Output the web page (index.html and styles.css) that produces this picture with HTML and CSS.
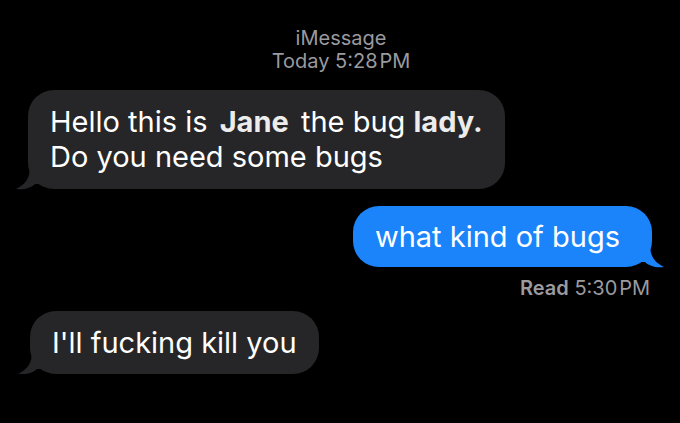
FILE: index.html
```html
<!DOCTYPE html>
<html lang="en">
<head>
    <meta charset="UTF-8">
    <meta name="viewport" content="width=device-width, initial-scale=1.0">
    <title>iMessage</title>
    <link rel="stylesheet" href="styles.css">
</head>
<body>
    <div class="chat">
        <div class="chat-header">
            <div>iMessage</div>
            <div>Today 5:28&#8202;PM</div>
        </div>

        <div class="bubble received first">
            Hello this is <b class="spaced">Jane</b> the bug <b>lady.</b><br>
            Do you need some bugs
            <svg class="tail" width="24" height="24" viewBox="0 0 24 24"><path d="M14 0 C14 12 10 18 0 23 C8 24 15 22 19 18 L24 18 L24 0 Z"/></svg>
        </div>

        <div class="bubble sent">
            what kind of bugs
            <svg class="tail" width="24" height="24" viewBox="0 0 24 24"><path d="M10 0 C10 12 14 18 24 23 C16 24 9 22 5 18 L0 18 L0 0 Z"/></svg>
        </div>
        <div class="receipt"><b>Read</b> 5:30&#8202;PM</div>

        <div class="bubble received">
            I'll fucking kill you
            <svg class="tail" width="24" height="24" viewBox="0 0 24 24"><path d="M14 0 C14 12 10 18 0 23 C8 24 15 22 19 18 L24 18 L24 0 Z"/></svg>
        </div>
    </div>
</body>
</html>
```

FILE: styles.css
```css
body {
    margin: 0;
    background: #000;
    font-family: Inter, "Noto Sans", sans-serif;
    color: #fff;
}
.chat {
    display: flex;
    flex-direction: column;
    padding: 27px 28px 0 30px;
}
.chat-header {
    text-align: center;
    color: #9a9a9f;
    font-size: 20px;
    line-height: 23px;
    margin-bottom: 17px;
}
.bubble {
    position: relative;
    font-size: 29px;
    line-height: 35px;
    padding: 14px 22px;
    border-radius: 26px;
}
.bubble b {
    font-weight: 700;
    color: #ececec;
}
.bubble .spaced {
    margin: 0 4px;
}
.received {
    align-self: flex-start;
    background: #262628;
}
.received .tail {
    position: absolute;
    left: -12px;
    bottom: -1px;
    fill: #262628;
}
.first {
    margin-left: -2px;
    padding-bottom: 15px;
}
.sent {
    align-self: flex-end;
    background: #1b84fb;
    margin-top: 17px;
    padding: 13px 32px 13px 22px;
}
.sent .tail {
    position: absolute;
    right: -12px;
    bottom: -1px;
    fill: #1b84fb;
}
.receipt {
    align-self: flex-end;
    color: #9a9a9f;
    font-size: 20px;
    line-height: 22px;
    margin-top: 10px;
    margin-bottom: 12px;
    margin-right: 2px;
}
.receipt b {
    font-weight: 600;
}
```
